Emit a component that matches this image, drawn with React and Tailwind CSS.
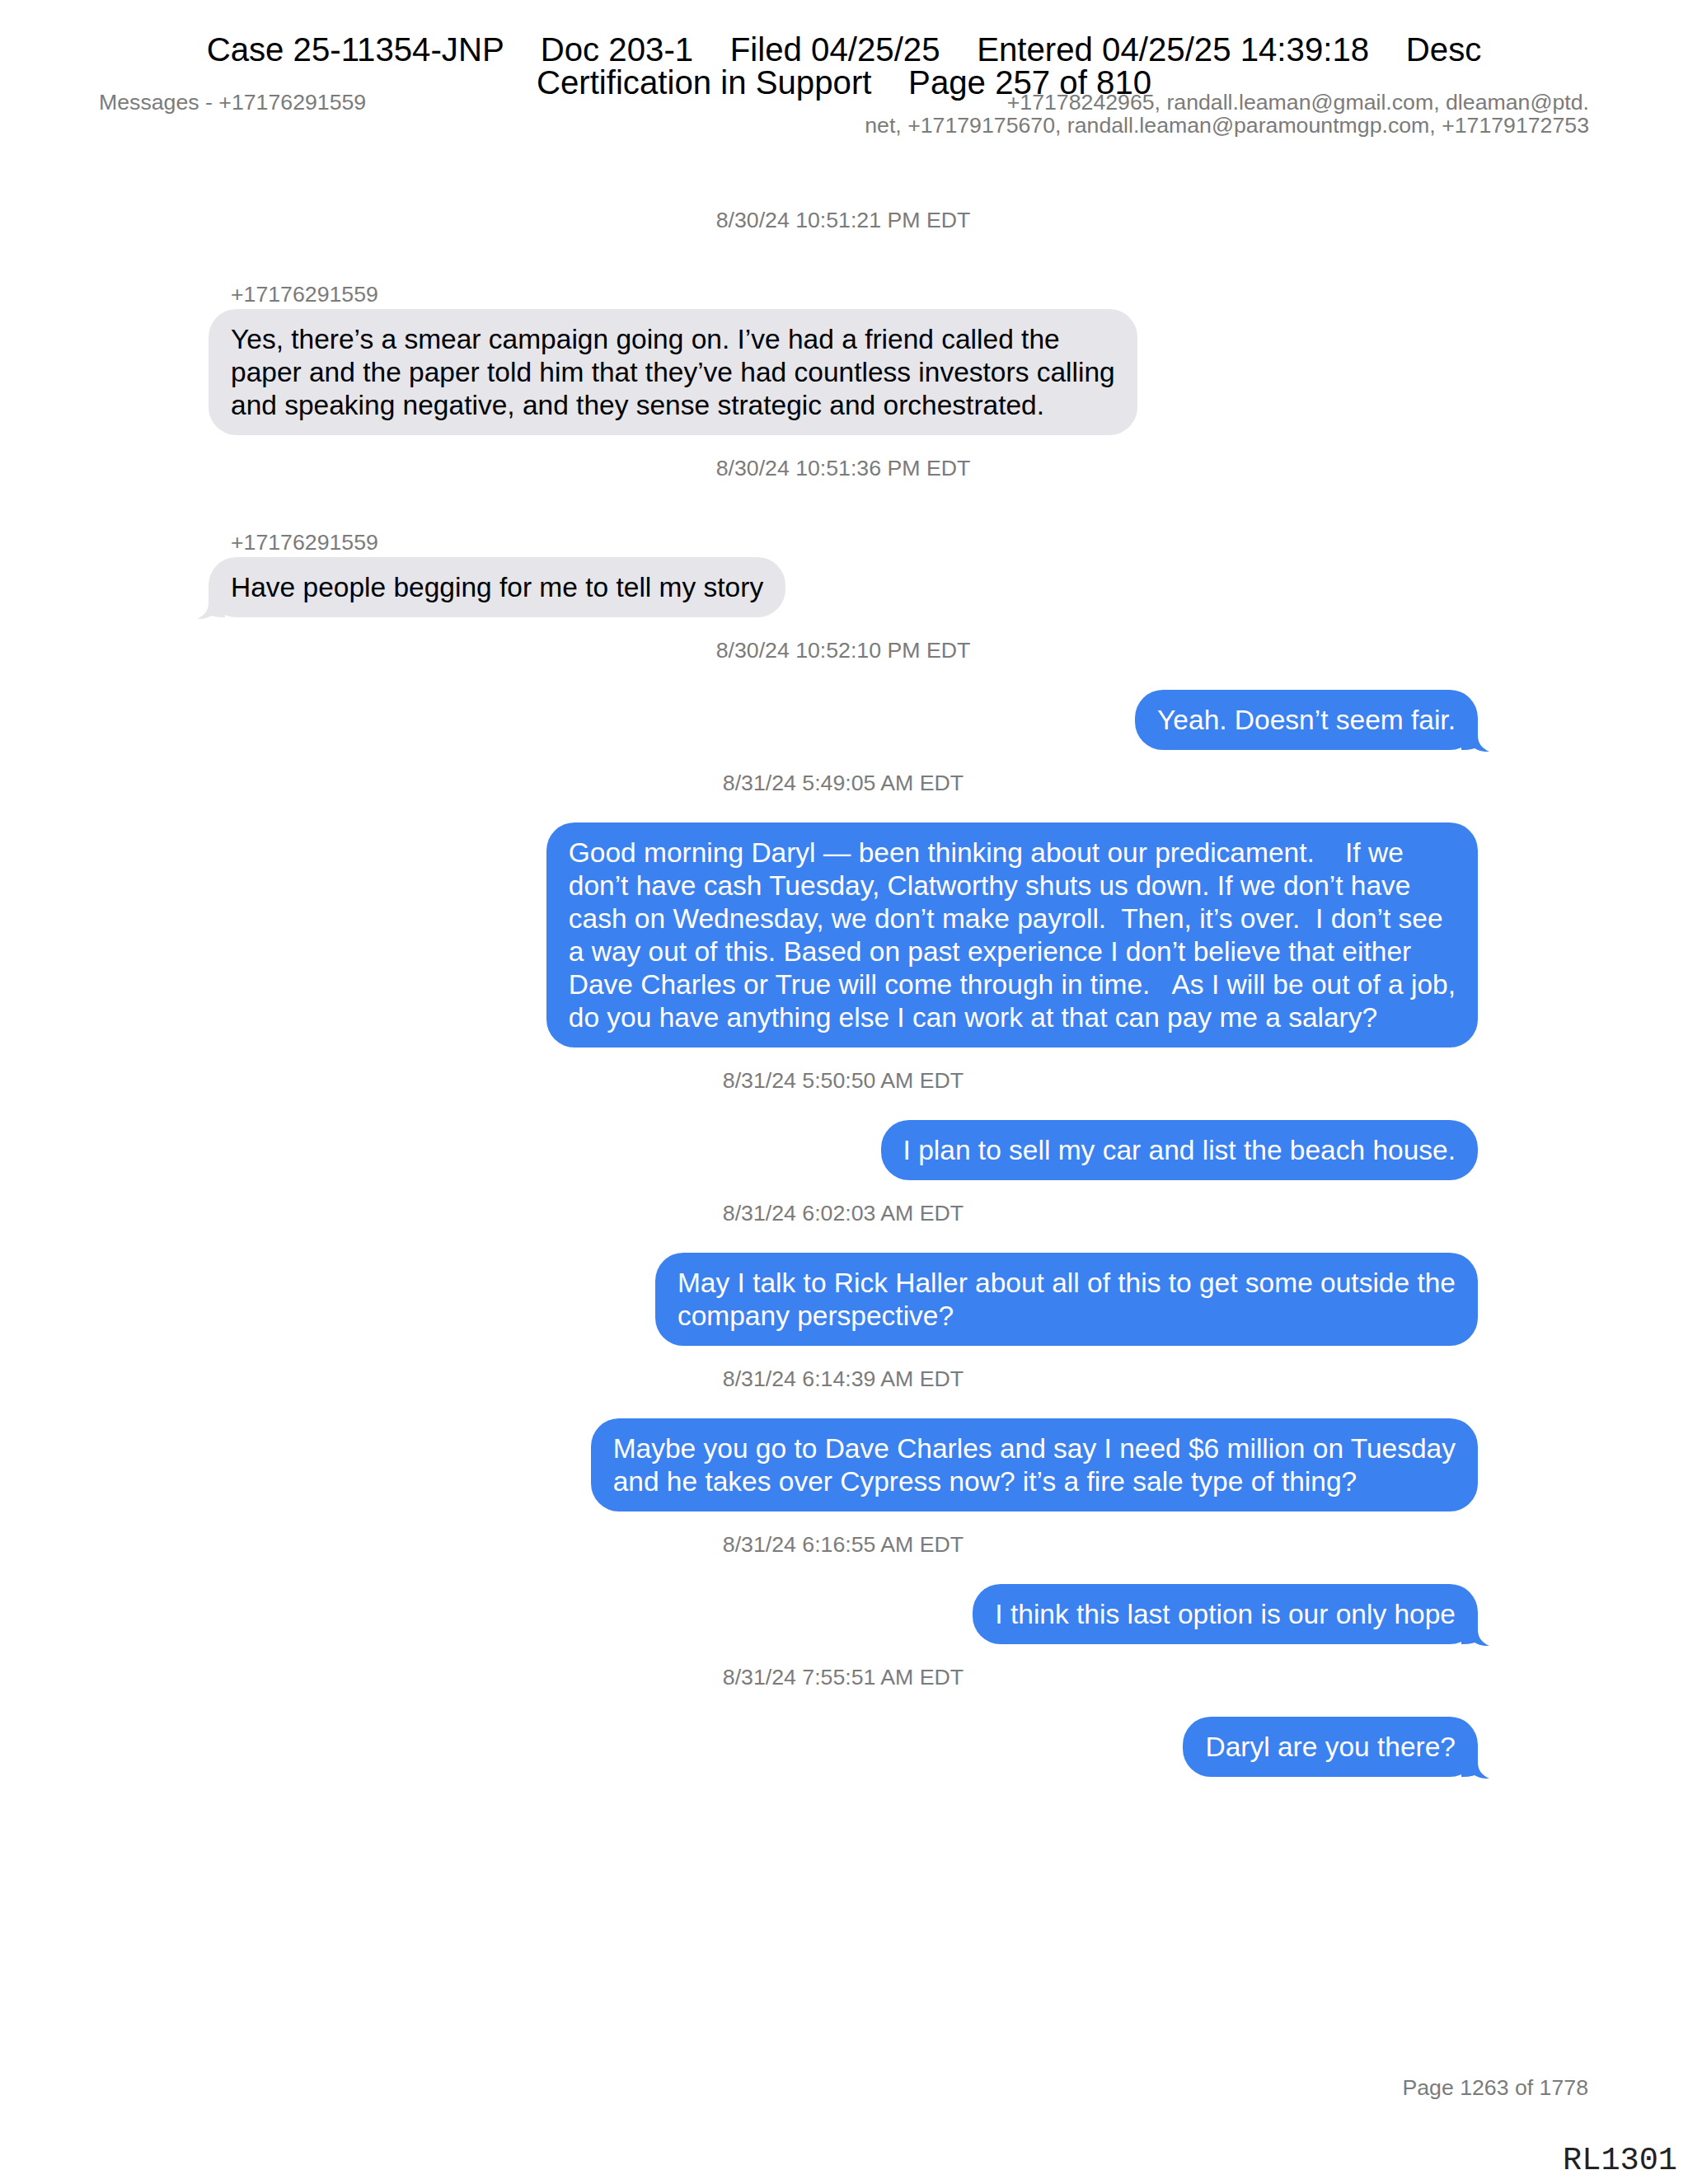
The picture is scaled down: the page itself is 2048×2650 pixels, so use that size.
import React from 'react';

const messages = [
    {
        time: "8/30/24 10:51:21 PM EDT",
        from: "+17176291559",
        lines: [
            "Yes, there’s a smear campaign going on. I’ve had a friend called the",
            "paper and the paper told him that they’ve had countless investors calling",
            "and speaking negative, and they sense strategic and orchestrated.",
        ],
        tail: false,
    },
    {
        time: "8/30/24 10:51:36 PM EDT",
        from: "+17176291559",
        lines: ["Have people begging for me to tell my story"],
        tail: true,
    },
    {
        time: "8/30/24 10:52:10 PM EDT",
        lines: ["Yeah. Doesn’t seem fair."],
        tail: true,
    },
    {
        time: "8/31/24 5:49:05 AM EDT",
        lines: [
            "Good morning Daryl — been thinking about our predicament.    If we",
            "don’t have cash Tuesday, Clatworthy shuts us down. If we don’t have",
            "cash on Wednesday, we don’t make payroll.  Then, it’s over.  I don’t see",
            "a way out of this. Based on past experience I don’t believe that either",
            "Dave Charles or True will come through in time.   As I will be out of a job,",
            "do you have anything else I can work at that can pay me a salary?",
        ],
        tail: false,
    },
    {
        time: "8/31/24 5:50:50 AM EDT",
        lines: ["I plan to sell my car and list the beach house."],
        tail: false,
    },
    {
        time: "8/31/24 6:02:03 AM EDT",
        lines: [
            "May I talk to Rick Haller about all of this to get some outside the",
            "company perspective?",
        ],
        tail: false,
    },
    {
        time: "8/31/24 6:14:39 AM EDT",
        lines: [
            "Maybe you go to Dave Charles and say I need $6 million on Tuesday",
            "and he takes over Cypress now? it’s a fire sale type of thing?",
        ],
        tail: false,
    },
    {
        time: "8/31/24 6:16:55 AM EDT",
        lines: ["I think this last option is our only hope"],
        tail: true,
    },
    {
        time: "8/31/24 7:55:51 AM EDT",
        lines: ["Daryl are you there?"],
        tail: true,
    },
];

// little iMessage style tail drawn over the bottom corner
const Tail = ({ incoming }) => (
    <svg
        width="34"
        height="40"
        viewBox="0 0 34 40"
        className={
            incoming
                ? "absolute bottom-[-2px] left-[-14px] -scale-x-100"
                : "absolute bottom-[-2px] right-[-14px]"
        }
    >
        <path
            d="M0 0 H20 V20 C20 30 25 36 34 40 C27 40.5 21 39 16 36 C12 37.5 7 38 0 38 Z"
            fill={incoming ? "#e5e5ea" : "#3b82f0"}
        />
    </svg>
);

const Bubble = ({ msg }) => {
    const incoming = !!msg.from;
    return (
        <div
            className={
                incoming
                    ? "relative w-fit self-start rounded-[34px] bg-[#e5e5ea] px-[27px] py-[16.5px] text-[33.5px] leading-[40px] text-black"
                    : "relative w-fit self-end rounded-[34px] bg-[#3b82f0] px-[27px] py-[16.5px] text-[33.5px] leading-[40px] text-white"
            }
        >
            {msg.lines.map((line, i) => (
                <div key={i} className="relative z-10 whitespace-pre">{line}</div>
            ))}
            {msg.tail && <Tail incoming={incoming} />}
        </div>
    );
};

export default function App() {
    return (
        <div className="relative w-[2048px] h-[2650px] bg-white font-['Liberation_Sans',Arial,sans-serif]">
            {/* court filing stamp, sits on top of the page */}
            <div className="absolute top-[41px] left-0 right-0 text-center text-[40.2px] leading-[40px] text-black whitespace-pre">
                <div>Case 25-11354-JNP    Doc 203-1    Filed 04/25/25    Entered 04/25/25 14:39:18    Desc</div>
                <div>Certification in Support    Page 257 of 810</div>
            </div>

            <div className="flex justify-between px-[120px] pt-[110px] text-[26.7px] leading-[28px] text-[#7b7b7b]">
                <div>Messages - +17176291559</div>
                <div className="text-right">
                    <div>+17178242965, randall.leaman@gmail.com, dleaman@ptd.</div>
                    <div>net, +17179175670, randall.leaman@paramountmgp.com, +17179172753</div>
                </div>
            </div>

            <div className="flex flex-col pl-[253px] pr-[255px] pt-[87px]">
                {messages.map((msg, i) => (
                    <div key={i} className={i === 0 ? "flex flex-col" : "flex flex-col mt-[26px]"}>
                        <div className="text-center text-[26.7px] leading-[28px] text-[#7b7b7b]">{msg.time}</div>
                        {msg.from ? (
                            <>
                                <div className="mt-[62px] pl-[27px] text-[26.7px] leading-[28px] text-[#7b7b7b]">{msg.from}</div>
                                <div className="mt-[4px] flex flex-col">
                                    <Bubble msg={msg} />
                                </div>
                            </>
                        ) : (
                            <div className="mt-[34px] flex flex-col">
                                <Bubble msg={msg} />
                            </div>
                        )}
                    </div>
                ))}
            </div>

            <div className="absolute left-0 right-0 top-[2519px] flex flex-col items-end">
                <div className="pr-[121px] text-[26.7px] leading-[28px] text-[#7b7b7b]">Page 1263 of 1778</div>
                <div className="mt-[55px] pr-[13px] font-['Liberation_Mono',monospace] text-[38.6px] leading-[40px] text-[#222]">RL1301</div>
            </div>
        </div>
    );
}
